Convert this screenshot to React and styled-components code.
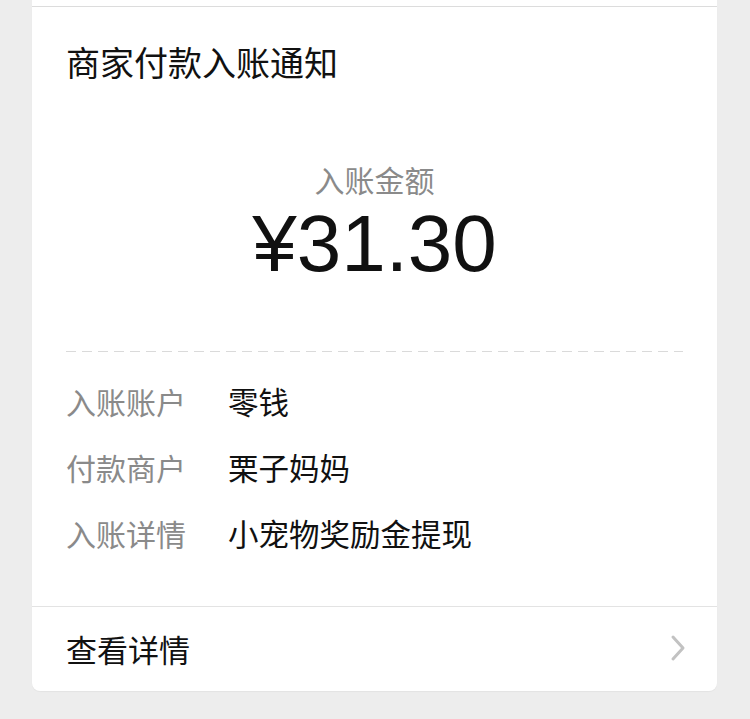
import React from "react";
import styled, { createGlobalStyle } from "styled-components";

const GlobalStyle = createGlobalStyle`
  html, body {
    margin: 0;
    padding: 0;
    background: #ededed;
  }
  body {
    font-family: "Noto Sans CJK SC", "Noto Sans", sans-serif;
    color: #111;
  }
`;

const details = [
  { label: "入账账户", value: "零钱" },
  { label: "付款商户", value: "栗子妈妈" },
  { label: "入账详情", value: "小宠物奖励金提现" },
];

const App = () => {
  return (
    <Page>
      <GlobalStyle />
      <Column>
        <PrevCard />
        <Card>
          <Title>商家付款入账通知</Title>
          <AmountBlock>
            <AmountLabel>入账金额</AmountLabel>
            <Amount>¥31.30</Amount>
          </AmountBlock>
          <Dashed />
          <Rows>
            {details.map((d) => (
              <Row key={d.label}>
                <Label>{d.label}</Label>
                <Value>{d.value}</Value>
              </Row>
            ))}
          </Rows>
          <Footer>
            <FooterText>查看详情</FooterText>
            <Chevron width="16" height="28" viewBox="0 0 16 28">
              <polyline
                points="3,3 13,14 3,25"
                fill="none"
                stroke="#c2c2c2"
                strokeWidth="3"
                strokeLinecap="round"
                strokeLinejoin="round"
              />
            </Chevron>
          </Footer>
        </Card>
      </Column>
    </Page>
  );
};

const Page = styled.div`
  width: 750px;
  height: 719px;
  overflow: hidden;
  background: #ededed;
`;

const Column = styled.div`
  margin: 0 33px 0 32px;
  display: flex;
  flex-direction: column;
`;

const PrevCard = styled.div`
  height: 6px;
  background: #fff;
  border-bottom: 1px solid #dcdcdc;
`;

const Card = styled.div`
  background: #fff;
  border-radius: 0 0 8px 8px;
  display: flex;
  flex-direction: column;
  box-shadow: 0 1px 1px rgba(0, 0, 0, 0.04);
`;

const Title = styled.div`
  padding: 31px 34px 0;
  font-size: 34px;
  line-height: 48px;
  color: #111;
`;

const AmountBlock = styled.div`
  margin-top: 73px;
  display: flex;
  flex-direction: column;
  align-items: center;
`;

const AmountLabel = styled.div`
  font-size: 30px;
  line-height: 40px;
  color: #8a8a8a;
`;

const Amount = styled.div`
  font-family: "Liberation Sans", Arial, sans-serif;
  font-size: 80px;
  line-height: 90px;
  color: #111;
`;

const Dashed = styled.div`
  margin: 62px 34px 0;
  height: 1px;
  background: repeating-linear-gradient(
    to right,
    #dadada 0,
    #dadada 10px,
    transparent 10px,
    transparent 16px
  );
`;

const Rows = styled.div`
  padding: 16px 34px 40px;
  display: flex;
  flex-direction: column;
`;

const Row = styled.div`
  display: flex;
  align-items: center;
  height: 66px;
  font-size: 30px;
`;

const Label = styled.div`
  width: 162px;
  color: #8a8a8a;
`;

const Value = styled.div`
  color: #111;
  font-size: 30.5px;
`;

const Footer = styled.div`
  height: 82px;
  border-top: 1px solid #e3e3e3;
  padding: 0 31px 2px 34px;
  display: flex;
  align-items: center;
  justify-content: space-between;
`;

const FooterText = styled.div`
  font-size: 31px;
  color: #111;
`;

const Chevron = styled.svg`
  display: block;
`;

export default App;
